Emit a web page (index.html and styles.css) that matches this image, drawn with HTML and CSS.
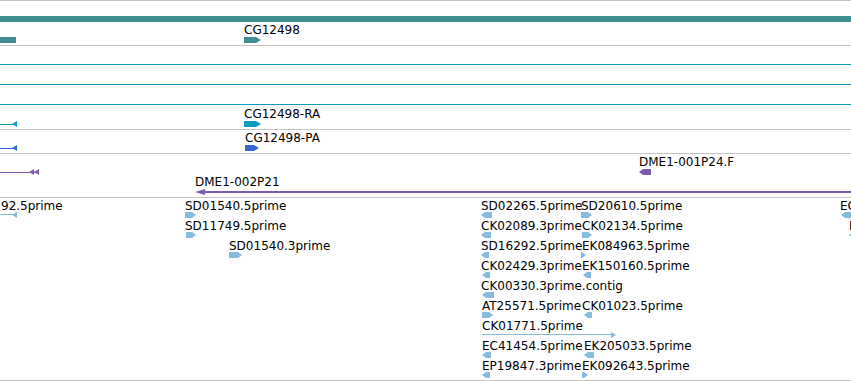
FILE: index.html
```html
<!doctype html>
<html lang="en">
<head>
  <meta charset="UTF-8">
  <title>Track view</title>
  <link rel="stylesheet" href="styles.css">
</head>
<body>
  <div class="tracks">
    <!-- gene span -->
    <div class="track t-gene">
      <div class="bar teal span"></div>
      <div class="feat teal" style="left:0;top:36px;width:16px"></div>
      <div class="label" style="left:244px;top:22px">CG12498</div>
      <div class="feat teal fwd wide" style="left:244px;top:36px;width:17px"></div>
    </div>

    <!-- transcripts -->
    <div class="track t-rna">
      <div class="rule cyan" style="top:18px"></div>
      <div class="rule cyan" style="top:38px"></div>
      <div class="rule cyan" style="top:58px"></div>
      <div class="line cyan" style="left:0;top:78px;width:16px"></div>
      <div class="head head-l cyan" style="left:12px;top:75px"></div>
      <div class="label" style="left:244px;top:61px">CG12498-RA</div>
      <div class="feat cyan fwd wide" style="left:244px;top:75px;width:17px"></div>
    </div>

    <!-- proteins -->
    <div class="track t-pep">
      <div class="line blue" style="left:0;top:18px;width:16px"></div>
      <div class="head head-l blue" style="left:12px;top:15px"></div>
      <div class="label" style="left:245px;top:1px">CG12498-PA</div>
      <div class="feat blue fwd wide" style="left:245px;top:15px;width:14px"></div>
    </div>

    <!-- clones -->
    <div class="track t-clone">
      <div class="line purple" style="left:0;top:18px;width:36px"></div>
      <div class="head head-l purple" style="left:29px;top:15px"></div>
      <div class="head head-l purple" style="left:34px;top:15px"></div>
      <div class="label" style="left:639px;top:1px">DME1-001P24.F</div>
      <div class="feat purple rev" style="left:639px;top:15px;width:12px"></div>
      <div class="label" style="left:195px;top:21px">DME1-002P21</div>
      <div class="line purple thick" style="left:198px;top:37px;width:660px"></div>
      <div class="head head-l purple big" style="left:195px;top:35px"></div>
    </div>

    <!-- ESTs -->
    <div class="track t-est">
      <div class="row">
        <div class="label" style="left:1px">92.5prime</div>
        <div class="line sky" style="left:0;width:16px"></div>
        <div class="head head-l sky" style="left:12px"></div>
        <div class="label" style="left:185px">SD01540.5prime</div>
        <div class="feat sky fwd" style="left:185px;width:11px"></div>
        <div class="label" style="left:481px">SD02265.5prime</div>
        <div class="feat sky rev" style="left:481px;width:11px"></div>
        <div class="label" style="left:581px">SD20610.5prime</div>
        <div class="feat sky fwd" style="left:581px;width:11px"></div>
        <div class="label" style="left:840px">EC</div>
        <div class="feat sky rev" style="left:841px;width:10px"></div>
      </div>
      <div class="row">
        <div class="label" style="left:185px">SD11749.5prime</div>
        <div class="feat sky fwd" style="left:186px;width:10px"></div>
        <div class="label" style="left:481px">CK02089.3prime</div>
        <div class="feat sky rev" style="left:481px;width:10px"></div>
        <div class="label" style="left:582px">CK02134.5prime</div>
        <div class="feat sky fwd" style="left:582px;width:10px"></div>
        <div class="label" style="left:849px">E</div>
        <div class="feat sky rev" style="left:849px;width:6px"></div>
      </div>
      <div class="row">
        <div class="label" style="left:229px">SD01540.3prime</div>
        <div class="feat sky fwd" style="left:229px;width:13px"></div>
        <div class="label" style="left:481px">SD16292.5prime</div>
        <div class="feat sky rev" style="left:481px;width:8px"></div>
        <div class="label" style="left:582px">EK084963.5prime</div>
        <div class="feat sky fwd" style="left:581px;width:5px"></div>
      </div>
      <div class="row">
        <div class="label" style="left:481px">CK02429.3prime</div>
        <div class="feat sky rev" style="left:482px;width:8px"></div>
        <div class="label" style="left:582px">EK150160.5prime</div>
        <div class="feat sky rev" style="left:583px;width:8px"></div>
      </div>
      <div class="row">
        <div class="label" style="left:481px">CK00330.3prime.contig</div>
        <div class="feat sky rev" style="left:482px;width:12px"></div>
      </div>
      <div class="row">
        <div class="label" style="left:482px">AT25571.5prime</div>
        <div class="feat sky fwd" style="left:482px;width:11px"></div>
        <div class="label" style="left:582px">CK01023.5prime</div>
        <div class="feat sky rev" style="left:584px;width:8px"></div>
      </div>
      <div class="row">
        <div class="label" style="left:482px">CK01771.5prime</div>
        <div class="line sky" style="left:482px;width:132px"></div>
        <div class="head head-r sky" style="left:611px"></div>
      </div>
      <div class="row">
        <div class="label" style="left:482px">EC41454.5prime</div>
        <div class="feat sky rev" style="left:482px;width:9px"></div>
        <div class="label" style="left:584px">EK205033.5prime</div>
        <div class="feat sky rev" style="left:584px;width:10px"></div>
      </div>
      <div class="row">
        <div class="label" style="left:482px">EP19847.3prime</div>
        <div class="feat sky rev" style="left:482px;width:8px"></div>
        <div class="label" style="left:582px">EK092643.5prime</div>
        <div class="feat sky fwd" style="left:582px;width:6px"></div>
      </div>
    </div>
  </div>
</body>
</html>
```
FILE: styles.css
```css
body {
  margin: 0px;
  padding: 0px;
  background-color: #ffffff;
  color: #000000;
  font: 12px 'DejaVu Sans', sans-serif;
  overflow: hidden;
}

.tracks {
  width: 851px;
  overflow: hidden;
  border-top: solid 1px #c4c4c4;
}

.track {
  position: relative;
  overflow: hidden;
  border-bottom: solid 1px #c4c4c4;
}

.t-gene  { height: 44px; }
.t-rna   { height: 83px; }
.t-pep   { height: 23px; }
.t-clone { height: 43px; }
.t-est   { height: 182px; }

.row {
  position: relative;
  height: 20px;
}

.label {
  position: absolute;
  top: 1px;
  line-height: 14px;
  white-space: nowrap;
}

.bar.span {
  position: absolute;
  left: 0px;
  top: 15px;
  width: 100%;
  height: 6px;
}

.rule {
  position: absolute;
  left: 0px;
  width: 100%;
  height: 1px;
}

.feat {
  position: absolute;
  top: 14px;
  height: 6px;
}

.line {
  position: absolute;
  top: 16px;
  height: 1px;
}

.line.thick {
  height: 2px;
}

.head {
  position: absolute;
  top: 14px;
  width: 5px;
  height: 6px;
}

.head.big {
  width: 10px;
  height: 6px;
}

.fwd {
  clip-path: polygon(0 0, calc(100% - 4px) 0, 100% 50%, calc(100% - 4px) 100%, 0 100%);
}

.fwd.wide {
  clip-path: polygon(0 0, calc(100% - 5px) 0, 100% 50%, calc(100% - 5px) 100%, 0 100%);
}

.rev {
  clip-path: polygon(4px 0, 100% 0, 100% 100%, 4px 100%, 0 50%);
}

.head-l {
  clip-path: polygon(0 50%, 100% 0, 100% 100%);
}

.head-r {
  clip-path: polygon(0 0, 100% 50%, 0 100%);
}

.teal   { background-color: #3f8e91; }
.cyan   { background-color: #0f9cc1; }
.blue   { background-color: #3468d0; }
.purple { background-color: #7a5bb0; }
.sky    { background-color: #86bbe0; }
```
